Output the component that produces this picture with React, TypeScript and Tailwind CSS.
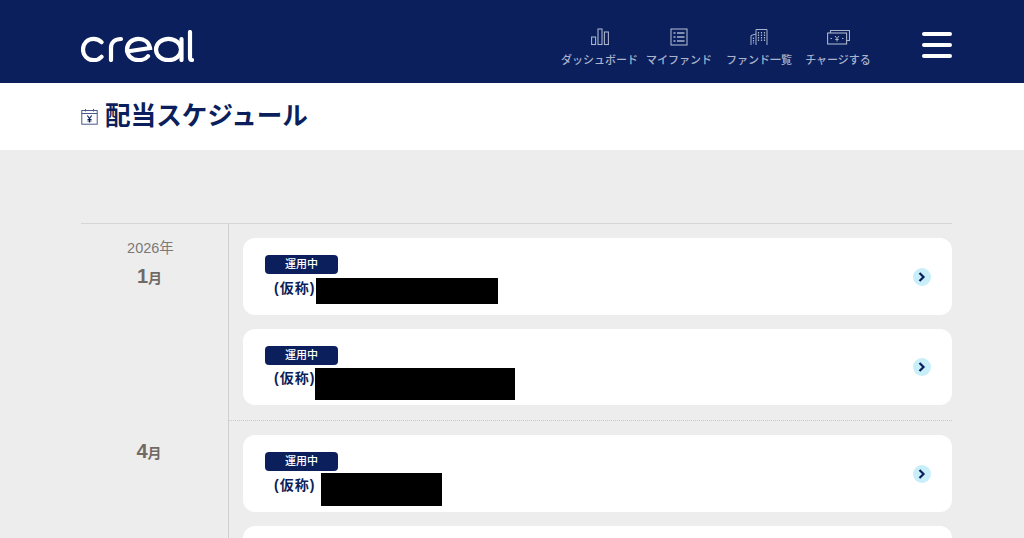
import React from "react";

const NAVY = "#0a1f5c";

const DashboardIcon = () => (
  <svg width="18" height="18" viewBox="0 0 18 18" fill="none" stroke="#a9b3cc" strokeWidth="1.1">
    <rect x="0.600" y="9" width="4" height="7.500" />
    <rect x="7" y="1" width="4" height="15.500" />
    <rect x="13.400" y="4" width="4" height="12.500" />
  </svg>
);

const FundIcon = () => (
  <svg width="18" height="18" viewBox="0 0 18 18" fill="none" stroke="#a9b3cc" strokeWidth="1.1">
    <rect x="1" y="1" width="16" height="16" />
    <path d="M3.500 5h2M7 5h7.500M3.500 9h2M7 9h7.500M3.500 13h2M7 13h7.500" strokeWidth="1.600" />
  </svg>
);

const BuildingIcon = () => (
  <svg width="18" height="18" viewBox="0 0 18 18" fill="none" stroke="#a9b3cc" strokeWidth="1">
    <path d="M6 17V1.500h11V17M6 6L1 7.500V17" />
    <path d="M8.500 4v9.500M11.500 4v9.500M14.500 4v9.500" strokeWidth="1.200" strokeDasharray="1.500 1" />
    <path d="M3.500 9.500v6" strokeWidth="1.200" strokeDasharray="1.500 1" />
  </svg>
);

const ChargeIcon = () => (
  <svg width="23" height="16" viewBox="0 0 23 16" fill="none" stroke="#a9b3cc" strokeWidth="1.1">
    <rect x="0.600" y="4" width="19" height="11" />
    <path d="M3.500 4V1.500h19V11.500h-2.900" />
    <path d="M8 7l2 2.500 2-2.500M10 9.500v3M8.300 10.500h3.400M3.500 9.500h1.500M15 9.500h1.500" strokeWidth="1" />
  </svg>
);

const CalendarIcon = () => (
  <svg width="17" height="17" viewBox="0 0 17 17" fill="none" stroke={NAVY} strokeWidth="1">
    <rect x="0.800" y="2.500" width="15.400" height="13.700" stroke="#4a5a88" />
    <path d="M0.800 5.500h15.400M4.500 1v2.500M12.500 1v2.500" stroke="#4a5a88" />
    <path d="M6.300 7.500l2.200 3 2.200-3M8.500 10.500v4M6.500 11.500h4M6.500 13h4" strokeWidth="1.100" />
  </svg>
);

const Logo = () => (
  <svg width="113" height="32" viewBox="0 0 113 32" fill="none" stroke="#fff" strokeWidth="4.200" strokeLinecap="round">
    <path d="M20.500 12.200C18.500 10 15.500 8.800 12.500 8.800 6.500 8.800 2 13.500 2 19.500s4.500 10.700 10.500 10.700c3 0 6-1.200 8-3.400" />
    <path d="M30 30V18c0-6 4-9 10-9" />
    <path d="M46 21.500l23-3.500C68 12.500 63.500 8.800 57.500 8.800 51 8.800 46 13.500 46 19.500s5 10.700 11.500 10.700c4 0 7.500-1.500 9.500-4" />
    <ellipse cx="87.500" cy="19.500" rx="12.500" ry="10.700" />
    <path d="M100.500 9v21" />
    <path d="M109 2v25c0 2 .7 3 2 3" />
  </svg>
);

const NavItem = ({ icon, label, className }: { icon: React.ReactNode; label: string; className: string }) => (
  <div className={`flex flex-col items-center ${className}`}>
    <div className="flex h-[18px] items-center justify-center">{icon}</div>
    <span className="mt-[6px] text-[11px] leading-[16px] font-medium whitespace-nowrap text-[#a9b3cc]">{label}</span>
  </div>
);

const Chevron = () => (
  <div className="flex h-[18px] w-[18px] items-center justify-center rounded-full bg-[#c8eefa]">
    <svg width="8" height="10" viewBox="0 0 8 10" fill="none" stroke={NAVY} strokeWidth="2.200">
      <path d="M1.500 1l4 4-4 4" />
    </svg>
  </div>
);

const FundCard = ({ black, height }: { black?: string; height: string }) => (
  <div className={`flex items-center justify-between rounded-[12px] bg-white pr-[21px] pl-[22px] ${height}`}>
    {black && (
      <>
        <div>
          <div className="flex h-[19px] w-[73px] items-center justify-center rounded-[4px] bg-[#0a1f5c] text-[11px] font-medium text-white">運用中</div>
          <div className="flex h-[24px] items-center pt-[4px] pl-[9px] text-[14px] font-bold text-[#0a1f5c]">
            <span className="tracking-[1px] whitespace-nowrap">(仮称)</span>
            <span className={`bg-black ${black}`} />
          </div>
        </div>
        <Chevron />
      </>
    )}
  </div>
);

export default function App() {
  return (
    <div className="h-[538px] overflow-hidden bg-[#ededed] font-['Liberation_Sans','Noto_Sans_CJK_JP',sans-serif]">
      <header className="flex h-[83px] items-center justify-between bg-[#0a1f5c] pr-[72px] pl-[81px]">
        <div className="pt-[9px]">
          <Logo />
        </div>
        <div className="flex items-center">
          <nav className="flex pt-[12px]">
            <NavItem icon={<DashboardIcon />} label="ダッシュボード" className="w-[77px]" />
            <NavItem icon={<FundIcon />} label="マイファンド" className="ml-[8px] w-[66px]" />
            <NavItem icon={<BuildingIcon />} label="ファンド一覧" className="ml-[14px] w-[66px]" />
            <NavItem icon={<ChargeIcon />} label="チャージする" className="ml-[13px] w-[66px]" />
          </nav>
          <div className="mt-[7px] ml-[51px] flex w-[30px] flex-col gap-[7px]">
            <div className="h-[4px] rounded-full bg-white" />
            <div className="h-[4px] rounded-full bg-white" />
            <div className="h-[4px] rounded-full bg-white" />
          </div>
        </div>
      </header>

      <div className="flex h-[67px] items-center bg-white pl-[81px]">
        <CalendarIcon />
        <h1 className="ml-[7px] -translate-y-[1px] text-[25.600px] leading-[36px] font-bold text-[#0a1f5c]">配当スケジュール</h1>
      </div>

      <main className="mt-[73px] mr-[72px] ml-[81px] flex border-t border-[#d6d6d6]">
        <div className="w-[148px] shrink-0 border-r border-[#d0d0d0] pr-[8px] text-center text-[#6f6a66]">
          <div className="h-[196px] pt-[14px]">
            <div className="text-[14.500px] leading-[20px] text-[#7d7875]">2026年</div>
            <div className="mt-[8px] pr-[2px] text-[20px] leading-[20px] font-bold">
              1<span className="text-[14px]">月</span>
            </div>
          </div>
          <div className="pt-[21px] pr-[3px] text-[20px] leading-[20px] font-bold">
            4<span className="text-[14px]">月</span>
          </div>
          <div className="h-[200px]" />
        </div>

        <div className="min-w-0 flex-1 pt-[14px] pl-[14px]">
          <div className="flex flex-col gap-[14px] pb-[15px]">
            <FundCard height="h-[77px]" black="mt-[6px] ml-[1px] h-[26px] w-[182px]" />
            <FundCard height="h-[76px]" black="mt-[10px] h-[32px] w-[200px]" />
          </div>
          <div className="-ml-[14px] border-t border-dotted border-[#c9c9c9]" />
          <div className="flex flex-col gap-[14px] pt-[14px]">
            <FundCard height="h-[77px]" black="mt-[9px] ml-[6px] h-[33px] w-[121px]" />
            <FundCard height="h-[77px]" />
          </div>
        </div>
      </main>
    </div>
  );
}
